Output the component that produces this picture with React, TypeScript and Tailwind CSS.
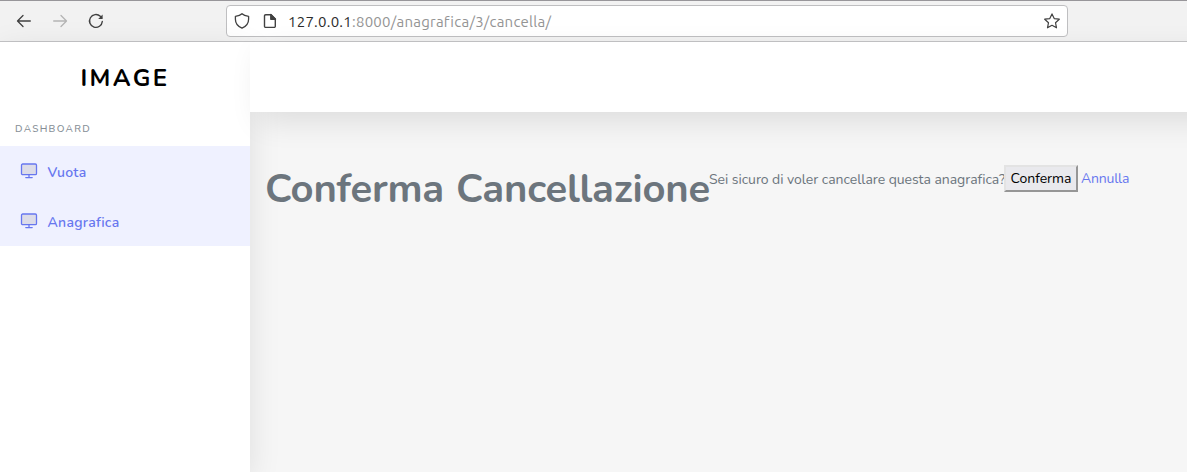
import React from 'react';

function MonitorIcon() {
  return (
    <svg width="18" height="18" viewBox="0 0 18 18" fill="none" stroke="#6777ef" strokeWidth="1.3" strokeLinecap="round" strokeLinejoin="round">
      <rect x="1.5" y="2" width="15" height="10.6" rx="1.2" fill="#dcdce8" />
      <path d="M9 12.6v3M5.8 15.6h6.4" />
    </svg>
  );
}

function NavItem({ label }: { label: string }) {
  return (
    <a className="flex h-[50px] items-center bg-[#eff1ff] pl-5 text-[14px] font-semibold text-[#6777ef]">
      <MonitorIcon />
      <span className="ml-[9.5px] pt-[3px] leading-5 tracking-[0.28px]">{label}</span>
    </a>
  );
}

function BrowserBar() {
  return (
    <div className="flex h-[42px] shrink-0 items-center border-t border-b border-t-[#98969a] border-b-[#c4c4c6] bg-[#f2f2f2]">
      <div className="flex w-[226px] items-center gap-5 pl-4">
        <svg width="16" height="16" viewBox="0 0 16 16" fill="none" stroke="#414141" strokeWidth="1.3" strokeLinecap="round" strokeLinejoin="round">
          <path d="M14.3 8H1.7M7 2.5 1.5 8 7 13.5" />
        </svg>
        <svg width="16" height="16" viewBox="0 0 16 16" fill="none" stroke="#b4b4b4" strokeWidth="1.3" strokeLinecap="round" strokeLinejoin="round">
          <path d="M1.7 8h12.6M9 2.5 14.5 8 9 13.5" />
        </svg>
        <svg width="16" height="16" viewBox="0 0 16 16" fill="none" stroke="#414141" strokeWidth="1.4" strokeLinecap="round">
          <path d="M14.3 8.5a6.4 6.4 0 1 1-2-5.2l1.2 1.2" />
          <path d="M14.6 1.5v4.4h-4.4z" fill="#414141" stroke="none" />
        </svg>
      </div>
      <div className="flex h-8 w-[842px] items-center rounded-[4px] border border-[#bfbfc1] bg-white pr-[7px] pl-[7px]">
        <svg width="16" height="16" viewBox="0 0 16 16" fill="none" stroke="#414141" strokeWidth="1.3" strokeLinejoin="round">
          <path d="M8 .8C6.6 2.2 4.2 3 1.4 3.3v2.9c0 3.8 2.5 7.2 6.6 9 4.1-1.8 6.6-5.2 6.6-9V3.3C11.8 3 9.4 2.2 8 .8z" />
        </svg>
        <svg className="ml-3" width="16" height="16" viewBox="0 0 16 16" fill="none" stroke="#414141" strokeWidth="1.4" strokeLinejoin="round">
          <path d="M3.7 1.7H9l4.3 4.3v7.2a1.2 1.2 0 0 1-1.2 1.2H3.7a1.2 1.2 0 0 1-1.2-1.2V2.9a1.2 1.2 0 0 1 1.2-1.2z" />
          <path d="M8.8 1.5v4.7h4.7z" fill="#414141" />
        </svg>
        <span className="ml-[10px] pt-px font-['Ubuntu','Noto_Sans',sans-serif] text-[15px] leading-5 tracking-[0.24px] whitespace-nowrap text-[#949494]">
          <span className="text-[#2b2b2b]">127.0.0.1</span>:8000/anagrafica/3/cancella/
        </span>
        <svg className="ml-auto" width="16" height="16" viewBox="0 0 16 16" fill="none" stroke="#414141" strokeWidth="1.2" strokeLinejoin="round">
          <path d="m8 .9 2.2 4.7 5.1.6-3.8 3.5 1 5.1L8 12.3l-4.5 2.5 1-5.1L.7 6.2l5.1-.6z" />
        </svg>
      </div>
    </div>
  );
}

export default function App() {
  return (
    <div className="flex h-[472px] w-[1187px] flex-col overflow-hidden bg-[#f6f6f6] font-['Nunito','Lato',sans-serif]">
      <BrowserBar />
      <div className="flex min-h-0 flex-1">
        <aside className="w-[250px] shrink-0 bg-white shadow-[0_8px_30px_rgba(0,0,0,0.1)]">
          <div className="flex h-[70px] items-center justify-center text-[24px] font-[670] tracking-[2.4px] text-black">
            <span className="pt-px">IMAGE</span>
          </div>
          <div className="flex h-[34px] items-center pt-[1px] pl-[15px] text-[10px] font-medium tracking-[1.3px] text-[#868e96]">DASHBOARD</div>
          <NavItem label="Vuota" />
          <NavItem label="Anagrafica" />
        </aside>
        <div className="min-w-0 flex-1">
          <header className="-mr-10 h-[70px] bg-white shadow-[10px_10px_30px_rgba(0,0,0,0.1)]" />
          <main className="flex items-start pt-[53px] pl-[15px] text-[14px] leading-[24px] whitespace-nowrap text-[#6c757d]">
            <h1 className="w-[444px] text-[40px] leading-12 font-[690] tracking-[-0.21px] [word-spacing:1.5px]">Conferma Cancellazione</h1>
            <p className="w-[295px] pt-[3px] tracking-[-0.04px]">Sei sicuro di voler cancellare questa anagrafica?</p>
            <button className="h-[27px] w-[74px] border-2 border-t-[#e3e3e3] border-r-[#969696] border-b-[#969696] border-l-[#e3e3e3] bg-[#e9e9ed] text-[14px] leading-[22px] text-black">Conferma</button>
            <a className="ml-[3px] pt-[2px] tracking-[-0.2px] text-[#6777ef]">Annulla</a>
          </main>
        </div>
      </div>
    </div>
  );
}
